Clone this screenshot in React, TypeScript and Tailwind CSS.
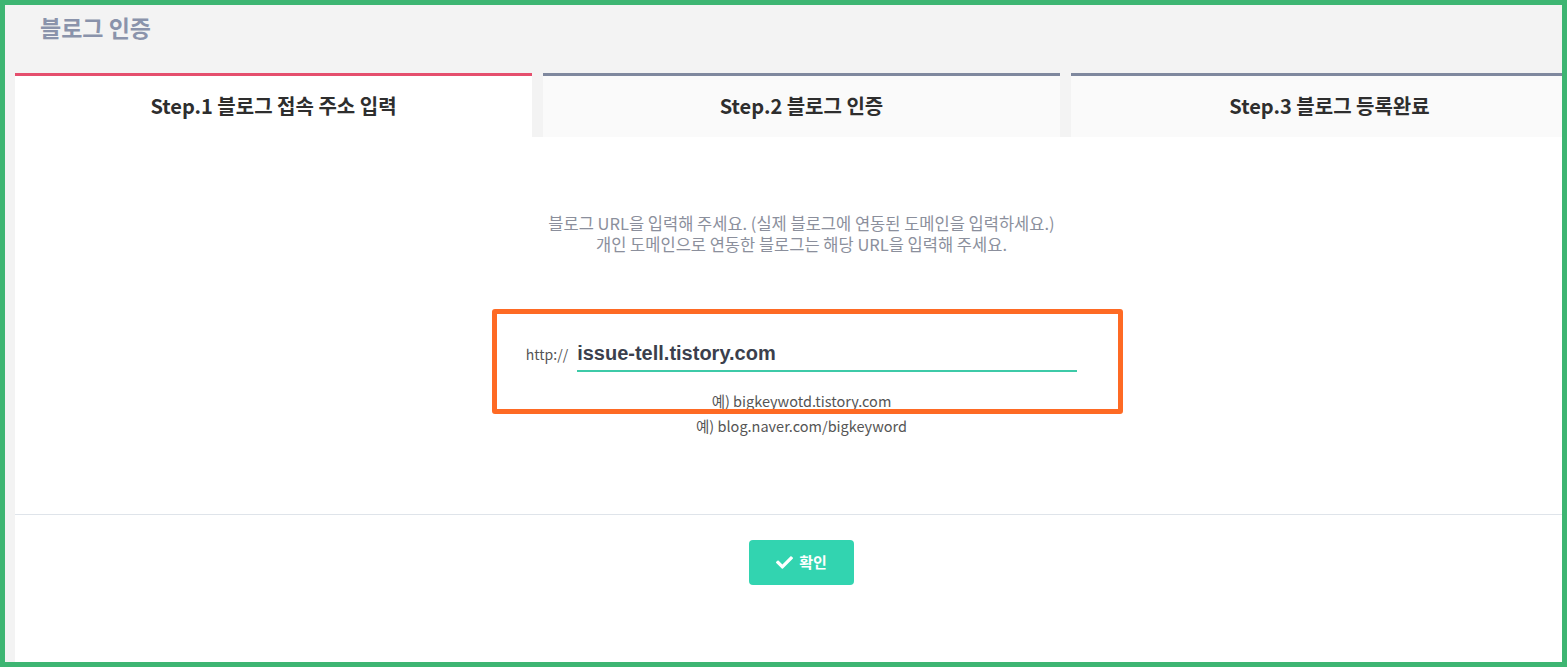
import React from 'react';
import { FaCheck } from 'react-icons/fa';

const tabs = [
  { label: 'Step.1 블로그 접속 주소 입력', active: true },
  { label: 'Step.2 블로그 인증', active: false },
  { label: 'Step.3 블로그 등록완료', active: false },
];

export default function App() {
  return (
    <div
      className="h-[667px] w-[1567px] overflow-hidden border-[5px] border-[#3db572] bg-[#f3f3f3]"
      style={{ fontFamily: '"Noto Sans CJK KR", "Noto Sans", sans-serif' }}
    >
      {/* page title */}
      <div className="h-[68px] pl-[35px] pt-[8px]">
        <h1 className="text-[23px] font-bold leading-[28px] text-[#8a93ab]">블로그 인증</h1>
      </div>

      <div className="ml-[10px] w-[1573px]">
        {/* steps */}
        <div className="flex gap-[11px]">
          {tabs.map((t) => (
            <div
              key={t.label}
              className={
                t.active
                  ? 'flex h-[64px] w-[517px] items-center justify-center border-t-[3px] border-[#e54f6d] bg-white pb-[2px]'
                  : 'flex h-[64px] w-[517px] items-center justify-center border-t-[3px] border-[#7f889e] bg-[#fafafa] pb-[2px]'
              }
            >
              <span className="text-[20px] font-bold text-[#2e2e2e]">{t.label}</span>
            </div>
          ))}
        </div>

        {/* panel */}
        <div className="relative h-[525px] bg-white">
          <div className="flex h-[377px] flex-col items-center pt-[76px]">
            <p className="text-center text-[16.5px] leading-[21px] text-[#8b8f9c]">
              블로그 URL을 입력해 주세요. (실제 블로그에 연동된 도메인을 입력하세요.)
              <br />
              개인 도메인으로 연동한 블로그는 해당 URL을 입력해 주세요.
            </p>

            <div className="mt-[81px] flex items-center gap-[9px]">
              <span className="text-[14px] text-[#555]">http://</span>
              <div className="flex h-[36px] w-[500px] items-center border-b-2 border-[#3dcaa8]">
                <span
                  className="text-[20px] font-bold text-[#3b3f4d]"
                  style={{ fontFamily: '"Liberation Sans", Arial, sans-serif' }}
                >
                  issue-tell.tistory.com
                </span>
              </div>
            </div>

            <div className="mt-4 text-center text-[14.5px] leading-[25px] text-[#555]">
              <p>예) bigkeywotd.tistory.com</p>
              <p>예) blog.naver.com/bigkeyword</p>
            </div>
          </div>

          <div className="flex justify-center border-t border-[#dfe4ea] pt-[25px]">
            <button className="flex h-[45px] w-[105px] items-center justify-center gap-[6px] rounded-[4px] bg-[#32d4b0] text-[15px] font-bold text-white">
              <FaCheck className="h-[17px] w-[17px]" />
              확인
            </button>
          </div>

          {/* highlight annotation */}
          <div className="pointer-events-none absolute left-[477px] top-[172px] h-[105px] w-[631px] rounded-[3px] border-[5px] border-[#fe6a24]" />
        </div>
      </div>
    </div>
  );
}
